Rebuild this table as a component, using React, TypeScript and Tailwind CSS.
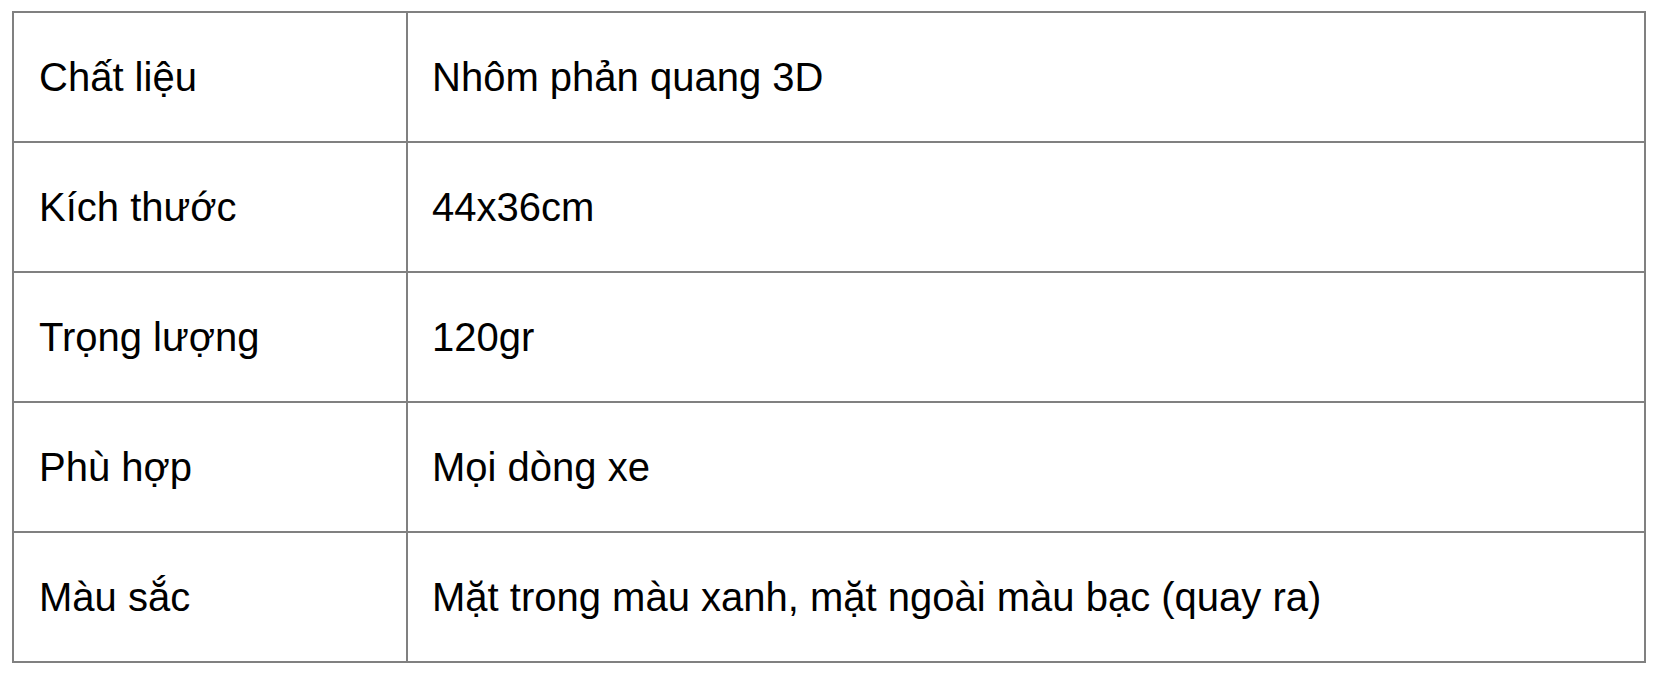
import React from "react";

const rows: [string, string][] = [
  ["Chất liệu", "Nhôm phản quang 3D"],
  ["Kích thước", "44x36cm"],
  ["Trọng lượng", "120gr"],
  ["Phù hợp", "Mọi dòng xe"],
  ["Màu sắc", "Mặt trong màu xanh, mặt ngoài màu bạc (quay ra)"],
];

export default function App() {
  return (
    <div className="w-[1662px] h-[676px] bg-white pl-[12px] pt-[11px]" style={{ fontFamily: '"Liberation Sans", Arial, sans-serif' }}>
      <table className="border-separate border-spacing-0 border-l-2 border-t-2 border-[#808080] w-[1634px] text-black text-[40px]">
        <tbody>
          {rows.map(([k, v]) => (
            <tr key={k}>
              <td className="w-[394px] h-[130px] border-r-2 border-b-2 border-[#808080] pl-[25px] pb-0 align-middle">{k}</td>
              <td className="h-[130px] border-r-2 border-b-2 border-[#808080] pl-[24px] pb-0 align-middle">{v}</td>
            </tr>
          ))}
        </tbody>
      </table>
    </div>
  );
}
